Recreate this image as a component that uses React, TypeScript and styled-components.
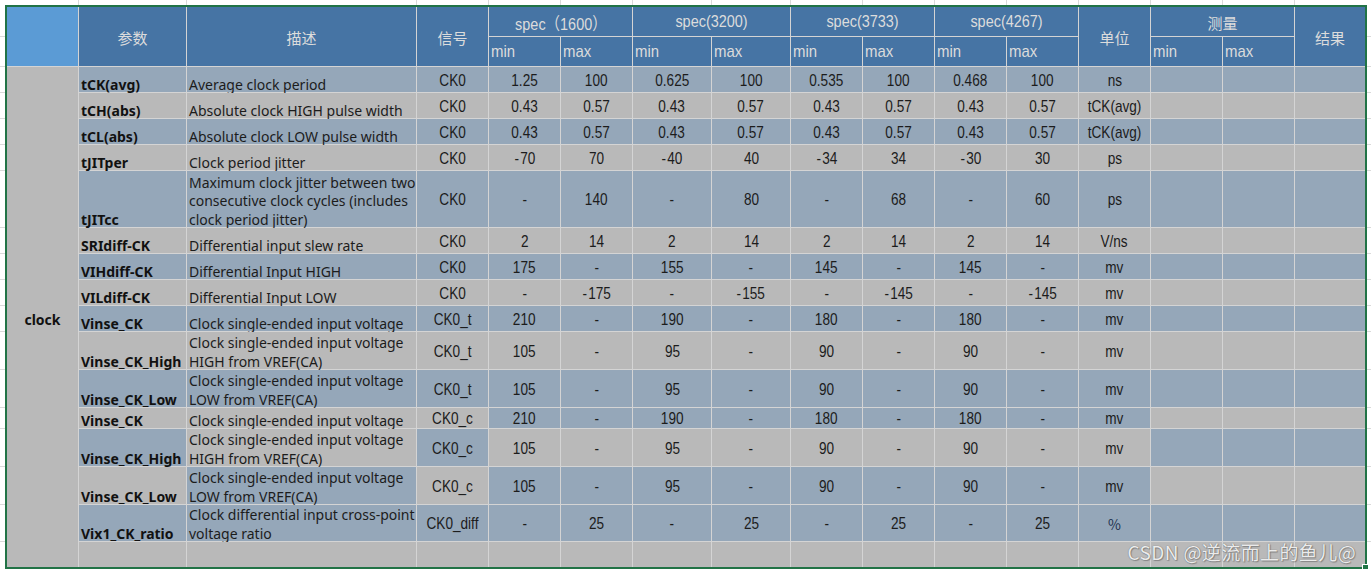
import React from 'react';
import styled, { createGlobalStyle } from 'styled-components';

const COLS = [71, 107, 229, 71, 71, 71, 78, 78, 71, 71, 71, 71, 71, 71, 71, 70];
const ROWS = [29, 29, 25, 25, 25, 25, 56, 25, 25, 25, 25, 37, 37, 20, 37, 37, 36, 25];
const colTemplate = COLS.map((c) => `${c}px`).join(' ');
const rowTemplate = ROWS.map((r) => `${r}px`).join(' ');

const BLUE = '#95a7b9';
const GRAY = '#b9b9b9';
const HEAD = '#4674a4';
const CORNER = '#5b9bd5';
const LINE = '#d4d4d4';
const OUTER_LINE = '#dadada';
const GREEN = '#217346';

const NARROW = `"Liberation Sans", "Noto Sans CJK SC", sans-serif`;
const UI = `"Noto Sans", "Noto Sans CJK SC", sans-serif`;
const CJK = `"Noto Sans CJK SC", "Noto Sans", sans-serif`;

type Tone = 'b' | 'g';

const Global = createGlobalStyle`
  html, body { margin: 0; padding: 0; background: #fff; overflow: hidden; }
  body { width: 1371px; height: 569px; }
`;

const Sheet = styled.div`
  display: grid;
  grid-template-columns: 5px max-content 1fr;
  grid-template-rows: 5px max-content 1fr;
  width: 1371px;
  height: 569px;
`;

const Blank = styled.div``;

const TopGutter = styled.div`
  display: grid;
  grid-template-columns: ${colTemplate};
  column-gap: 1px;
  padding: 0 2px;
  background: ${OUTER_LINE};
  background-clip: content-box;
`;

const SideGutter = styled.div`
  display: grid;
  grid-template-rows: ${rowTemplate};
  row-gap: 1px;
  padding: 2px 0;
  background: ${OUTER_LINE};
  background-clip: content-box;
`;

const GutterCell = styled.div`
  background: #fff;
`;

const TableFrame = styled.div`
  position: relative;
  border: 2px solid ${GREEN};
`;

const Grid = styled.div`
  display: grid;
  grid-template-columns: ${colTemplate};
  grid-template-rows: ${rowTemplate};
  gap: 1px;
  background: ${LINE};
`;

const HeaderCell = styled.div<{ $rows?: number; $cols?: number; $left?: boolean; $corner?: boolean }>`
  grid-row: span ${(p) => p.$rows ?? 1};
  grid-column: span ${(p) => p.$cols ?? 1};
  background: ${(p) => (p.$corner ? CORNER : HEAD)};
  color: #dcdcdc;
  display: flex;
  align-items: center;
  justify-content: ${(p) => (p.$left ? 'flex-start' : 'center')};
  padding-left: ${(p) => (p.$left ? '2px' : '0')};
  padding-top: 1px;
  font-family: ${NARROW};
  font-size: 17px;
  white-space: nowrap;
`;

const HeadLabel = styled.span`
  font-family: ${CJK};
  font-size: 15px;
`;

/* condensed rendering of the Excel "DengXian"-style numbers */
const Narrow = styled.span<{ $origin?: string; $scale?: number }>`
  display: inline-block;
  transform: scaleX(${(p) => p.$scale ?? 0.8});
  transform-origin: ${(p) => p.$origin ?? 'center'};
`;

const Cell = styled.div<{ $tone: Tone }>`
  background: ${(p) => (p.$tone === 'b' ? BLUE : GRAY)};
  min-width: 0;
`;

const ClockCell = styled.div`
  grid-row: span 16;
  background: ${GRAY};
  display: flex;
  align-items: center;
  justify-content: center;
  padding-top: 4px;
  font-family: ${UI};
  font-weight: 700;
  font-size: 14px;
  color: #111;
`;

const ParamCell = styled(Cell)`
  display: flex;
  align-items: flex-end;
  padding-left: 2px;
  font-family: ${UI};
  font-weight: 700;
  font-size: 14px;
  color: #111;
  white-space: nowrap;
`;

const DescCell = styled(Cell)`
  display: flex;
  align-items: flex-end;
  padding-left: 2px;
  font-family: ${UI};
  font-size: 14px;
  color: #1c1c1c;
  white-space: nowrap;
`;

const BottomText = styled.div`
  line-height: 18.5px;
  margin-bottom: -2px;
`;

const ValueCell = styled(Cell)<{ $accent?: boolean }>`
  display: flex;
  align-items: center;
  justify-content: center;
  padding-top: 2px;
  font-family: ${(p) => (p.$accent ? CJK : NARROW)};
  font-size: ${(p) => (p.$accent ? '14px' : '17px')};
  color: ${(p) => (p.$accent ? '#1f3350' : '#1c1c1c')};
  white-space: nowrap;
`;

const Watermark = styled.div`
  position: absolute;
  right: 9px;
  bottom: 6px;
  font-family: ${CJK};
  font-size: 19px;
  line-height: 1;
  letter-spacing: 0.4px;
  color: rgba(255, 255, 255, 0.88);
  text-shadow: 0 0 1px rgba(60, 60, 60, 0.7), 1px 1px 1px rgba(0, 0, 0, 0.25);
  white-space: nowrap;
  pointer-events: none;
`;

const FillHandle = styled.div`
  position: absolute;
  right: -4px;
  bottom: -4px;
  width: 5px;
  height: 5px;
  background: ${GREEN};
  border: 1px solid #fff;
`;

type Tones = { p: Tone; d: Tone; s: Tone; v: Tone; m: Tone };
const all = (t: Tone): Tones => ({ p: t, d: t, s: t, v: t, m: t });

type Row = {
  p: string;
  d: string[];
  s: string;
  v: string[];
  u: string;
  tones: Tones;
};

const vals0 = ['0.43', '0.57', '0.43', '0.57', '0.43', '0.57', '0.43', '0.57'];
const high = ['105', '-', '95', '-', '90', '-', '90', '-'];
const single = ['210', '-', '190', '-', '180', '-', '180', '-'];
const HIGH_D = ['Clock single-ended input voltage', 'HIGH from VREF(CA)'];
const LOW_D = ['Clock single-ended input voltage', 'LOW from VREF(CA)'];

const rows: Row[] = [
  { p: 'tCK(avg)', d: ['Average clock period'], s: 'CK0', v: ['1.25', '100', '0.625', '100', '0.535', '100', '0.468', '100'], u: 'ns', tones: all('b') },
  { p: 'tCH(abs)', d: ['Absolute clock HIGH pulse width'], s: 'CK0', v: vals0, u: 'tCK(avg)', tones: all('g') },
  { p: 'tCL(abs)', d: ['Absolute clock LOW pulse width'], s: 'CK0', v: vals0, u: 'tCK(avg)', tones: all('b') },
  { p: 'tJITper', d: ['Clock period jitter'], s: 'CK0', v: ['-70', '70', '-40', '40', '-34', '34', '-30', '30'], u: 'ps', tones: all('g') },
  {
    p: 'tJITcc',
    d: ['Maximum clock jitter between two', 'consecutive clock cycles (includes', 'clock period jitter)'],
    s: 'CK0',
    v: ['-', '140', '-', '80', '-', '68', '-', '60'],
    u: 'ps',
    tones: all('b'),
  },
  { p: 'SRIdiff-CK', d: ['Differential input slew rate'], s: 'CK0', v: ['2', '14', '2', '14', '2', '14', '2', '14'], u: 'V/ns', tones: all('g') },
  { p: 'VIHdiff-CK', d: ['Differential Input HIGH'], s: 'CK0', v: ['175', '-', '155', '-', '145', '-', '145', '-'], u: 'mv', tones: all('b') },
  { p: 'VILdiff-CK', d: ['Differential Input LOW'], s: 'CK0', v: ['-', '-175', '-', '-155', '-', '-145', '-', '-145'], u: 'mv', tones: all('g') },
  { p: 'Vinse_CK', d: ['Clock single-ended input voltage'], s: 'CK0_t', v: single, u: 'mv', tones: all('b') },
  { p: 'Vinse_CK_High', d: HIGH_D, s: 'CK0_t', v: high, u: 'mv', tones: all('g') },
  { p: 'Vinse_CK_Low', d: LOW_D, s: 'CK0_t', v: high, u: 'mv', tones: all('b') },
  { p: 'Vinse_CK', d: ['Clock single-ended input voltage'], s: 'CK0_c', v: single, u: 'mv', tones: { p: 'g', d: 'g', s: 'g', v: 'b', m: 'g' } },
  { p: 'Vinse_CK_High', d: HIGH_D, s: 'CK0_c', v: high, u: 'mv', tones: { p: 'b', d: 'g', s: 'b', v: 'g', m: 'b' } },
  { p: 'Vinse_CK_Low', d: LOW_D, s: 'CK0_c', v: high, u: 'mv', tones: { p: 'g', d: 'b', s: 'g', v: 'b', m: 'g' } },
  {
    p: 'Vix1_CK_ratio',
    d: ['Clock differential input cross-point', 'voltage ratio'],
    s: 'CK0_diff',
    v: ['-', '25', '-', '25', '-', '25', '-', '25'],
    u: '%',
    tones: all('b'),
  },
  { p: '', d: [], s: '', v: ['', '', '', '', '', '', '', ''], u: '', tones: all('g') },
];

const specs = ['spec（1600）', 'spec(3200)', 'spec(3733)', 'spec(4267)'];

/* negative numbers are shown with a spaced hyphen, as in the sheet */
const showValue = (v: string) => (v.length > 1 && v.startsWith('-') ? `-\u200a${v.slice(1)}` : v);

function DataRow({ row }: { row: Row }) {
  const t = row.tones;
  return (
    <>
      <ParamCell $tone={t.p}>
        <BottomText>{row.p}</BottomText>
      </ParamCell>
      <DescCell $tone={t.d}>
        <BottomText>
          {row.d.map((line, i) => (
            <div key={i}>{line}</div>
          ))}
        </BottomText>
      </DescCell>
      <ValueCell $tone={t.s}>
        <Narrow>{row.s}</Narrow>
      </ValueCell>
      {row.v.map((v, i) => (
        <ValueCell key={i} $tone={t.v}>
          <Narrow>{showValue(v)}</Narrow>
        </ValueCell>
      ))}
      <ValueCell $tone={t.v} $accent={row.u === '%'}>
        {row.u === '%' ? row.u : <Narrow>{row.u}</Narrow>}
      </ValueCell>
      <Cell $tone={t.m} />
      <Cell $tone={t.m} />
      <Cell $tone={t.m} />
    </>
  );
}

export default function App() {
  return (
    <>
      <Global />
      <Sheet>
        <Blank />
        <TopGutter>
          {COLS.map((_, i) => (
            <GutterCell key={i} />
          ))}
        </TopGutter>
        <Blank />
        <SideGutter>
          {ROWS.map((_, i) => (
            <GutterCell key={i} />
          ))}
        </SideGutter>
        <TableFrame>
          <Grid>
            <HeaderCell $rows={2} $corner />
            <HeaderCell $rows={2}>
              <HeadLabel>参数</HeadLabel>
            </HeaderCell>
            <HeaderCell $rows={2}>
              <HeadLabel>描述</HeadLabel>
            </HeaderCell>
            <HeaderCell $rows={2}>
              <HeadLabel>信号</HeadLabel>
            </HeaderCell>
            {specs.map((s) => (
              <HeaderCell key={s} $cols={2}>
                <Narrow $scale={0.85}>{s}</Narrow>
              </HeaderCell>
            ))}
            <HeaderCell $rows={2}>
              <HeadLabel>单位</HeadLabel>
            </HeaderCell>
            <HeaderCell $cols={2}>
              <HeadLabel>测量</HeadLabel>
            </HeaderCell>
            <HeaderCell $rows={2}>
              <HeadLabel>结果</HeadLabel>
            </HeaderCell>
            {[0, 1, 2, 3, 4].map((i) => (
              <React.Fragment key={i}>
                <HeaderCell $left>
                  <Narrow $origin="left" $scale={0.88}>
                    min
                  </Narrow>
                </HeaderCell>
                <HeaderCell $left>
                  <Narrow $origin="left" $scale={0.88}>
                    max
                  </Narrow>
                </HeaderCell>
              </React.Fragment>
            ))}
            <ClockCell>clock</ClockCell>
            {rows.map((r, i) => (
              <DataRow key={i} row={r} />
            ))}
          </Grid>
          <Watermark>CSDN @逆流而上的鱼儿@</Watermark>
          <FillHandle />
        </TableFrame>
        <SideGutter>
          {ROWS.map((_, i) => (
            <GutterCell key={i} />
          ))}
        </SideGutter>
      </Sheet>
    </>
  );
}
